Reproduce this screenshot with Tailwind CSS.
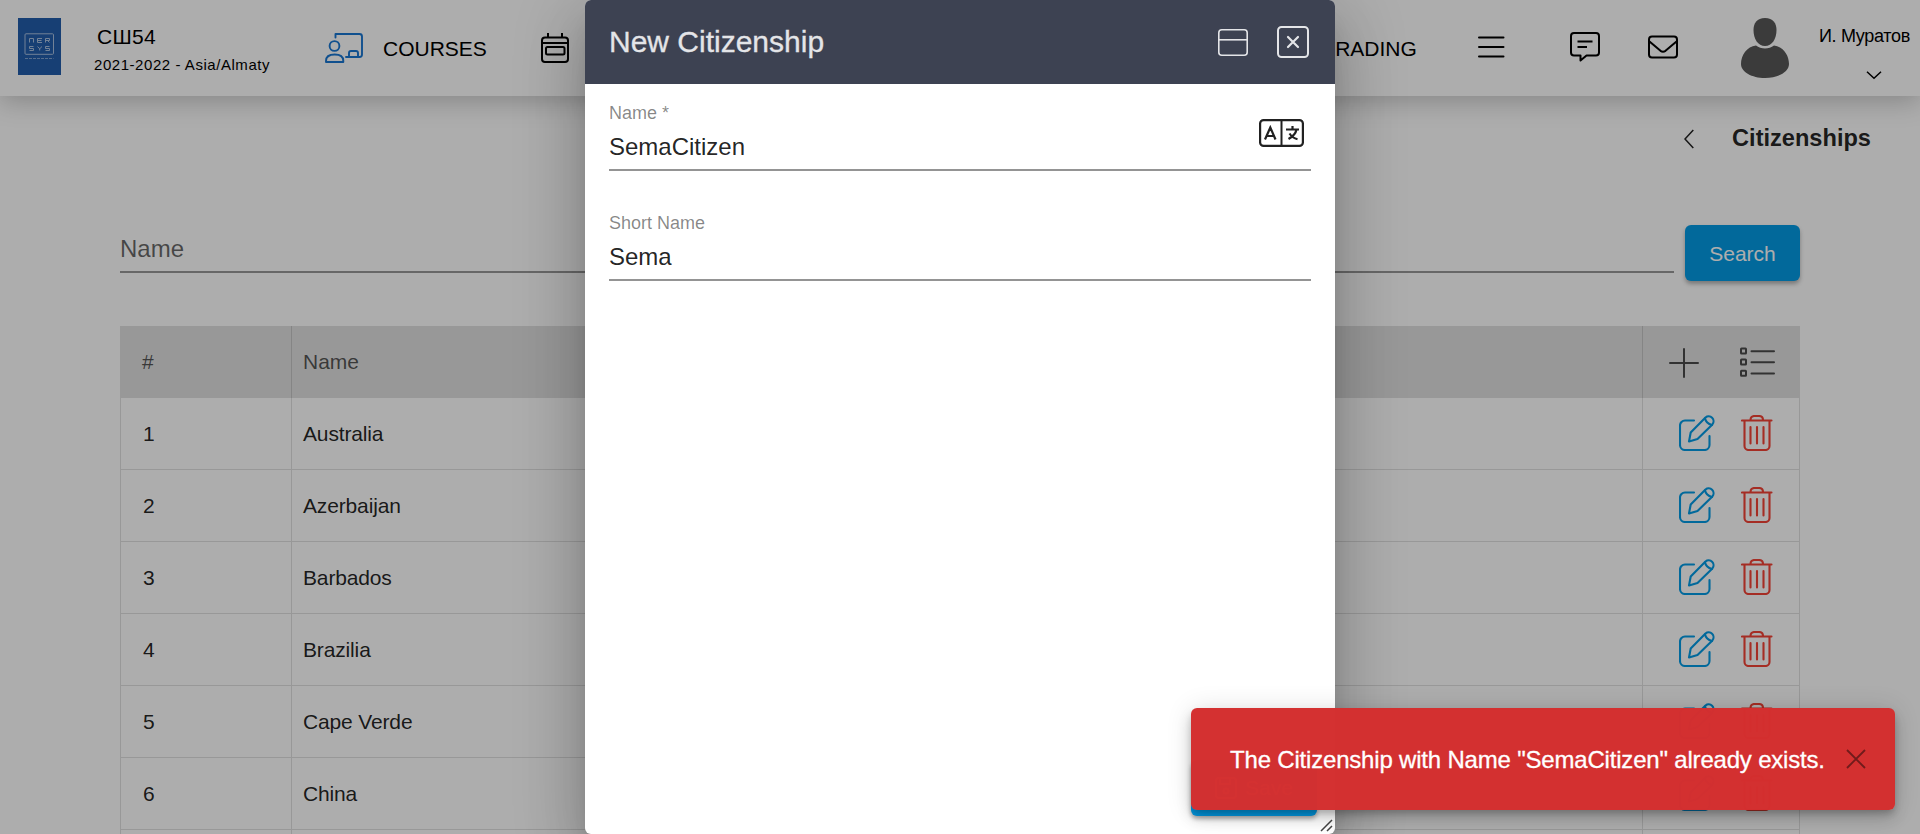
<!DOCTYPE html>
<html lang="en">
<head>
<meta charset="utf-8">
<title>Citizenships</title>
<script src="https://cdn.jsdelivr.net/npm/@tailwindcss/browser@4"></script>
</head>
<body class="relative h-[834px] w-[1920px] overflow-hidden bg-white font-['Liberation_Sans',Arial,sans-serif] text-[21px] text-black/87">
<svg class="hidden">
  <symbol id="edit" viewBox="0 0 36 36"><g fill="none" stroke="currentColor" stroke-width="2.100" stroke-linecap="round" stroke-linejoin="round"><path d="M15 5.500H6A5 5 0 0 0 1 10.500V30A5 5 0 0 0 6 35H25.500A5 5 0 0 0 30.500 30V21"/><path d="M26.500 2.500a4.900 4.900 0 0 1 6.900 6.900L18.500 24L10 26.500L11.700 17.500z"/><path d="M26 3.200Q27 8.500 33 10"/></g></symbol>
  <symbol id="trash" viewBox="0 0 32 36"><g fill="none" stroke="currentColor" stroke-width="2.100" stroke-linecap="round" stroke-linejoin="round"><path d="M1 5.500H30.500M9.500 5C9.500 2.500 11 1 13.500 1H18C20.500 1 22 2.500 22 5M3.500 6V31A4 4 0 0 0 7.500 35H24.500A4 4 0 0 0 28.500 31V6M9.500 12V28.500M16 12V28.500M22.500 12V28.500"/></g></symbol>
</svg>

<header class="relative flex h-24 bg-white text-black shadow-[0_6px_24px_rgba(0,0,0,0.22)]">
  <div class="mt-[18px] ml-[18px] flex h-[57px] w-[43px] justify-center bg-[#225dac]">
    <svg class="mt-[15px]" width="31" height="28" viewBox="0 0 31 28" fill="none" stroke="#a9c0df">
      <rect x="1" y=".8" width="28.500" height="20.500" rx="1" stroke-width="1"/>
      <path d="M5.500 9.500V5.500h4v4M18 5.500h-4.500v4h4.500M13.500 7.500h4M21.500 9.500V5.500h4v2h-4M23.500 7.500l2 2M9.500 13.500h-4v2h4v2h-4M13.500 13.500l2.200 2.300L18 13.500M15.700 15.500v2M25.500 13.500h-4v2h4v2h-4"/>
      <path d="M1 25.500h28.500" stroke-dasharray="3 1" opacity=".7"/>
    </svg>
  </div>
  <div class="ml-[33px] flex w-[231px] flex-col pt-[25px]">
    <span class="pl-[3px] text-[21px] leading-6 tracking-[0.3px]">СШ54</span>
    <span class="mt-[7px] text-[15px] leading-[18px] tracking-[0.55px]">2021-2022 - Asia/Almaty</span>
  </div>
  <div class="flex h-[96px] items-center">
    <svg width="38" height="30" viewBox="0 0 38 30" fill="none" stroke="#1976d2" stroke-width="1.900" stroke-linecap="round" stroke-linejoin="round"><path d="M10.500 4.500V1H34.500Q37 1 37 3.500V21.500Q37 24 34.500 24H21M24 23.500V20Q24 18 26 18H31Q33 18 33 20V23.500"/><circle cx="9.500" cy="13" r="4.900"/><path d="M1 29V28Q1 21.500 9.700 21.500T18.300 28V29Z"/></svg>
    <span class="ml-[20px] pt-px">COURSES</span>
    <svg class="ml-[54px]" width="28" height="30" viewBox="0 0 28 30" fill="none" stroke="black" stroke-width="2"><rect x="1" y="4.500" width="26" height="24.500" rx="3"/><path d="M7 0V4.500M21 0V4.500M1 10H27"/><rect x="5" y="14" width="18.500" height="7.500" rx="1.500"/></svg>
  </div>
  <div class="ml-[750px] flex h-[96px] items-center">
    <span class="pt-px">GRADING</span>
    <svg class="mb-0.5 ml-[61px]" width="27" height="22" viewBox="0 0 27 22" stroke="black" stroke-width="2" stroke-linecap="round"><path d="M1 1.500H25.500M1 11H25.500M1 20.500H25.500"/></svg>
    <svg class="mb-0.5 ml-[65px]" width="30" height="31" viewBox="0 0 30 31" fill="none" stroke="black" stroke-width="2" stroke-linejoin="round"><path d="M4 1H26Q29 1 29 4V20.500Q29 23.500 26 23.500H16.500L10.500 28.500V23.500H4Q1 23.500 1 20.500V4Q1 1 4 1Z"/><path d="M7.500 9.500H22.500M7.500 15H17"/></svg>
    <svg class="mb-0.5 ml-[48px]" width="30" height="24" viewBox="0 0 30 24" fill="none" stroke="black" stroke-width="2" stroke-linejoin="round"><rect x="1" y="1.500" width="28" height="21" rx="3"/><path d="M1.500 6.500L12.500 15.800Q15 17.500 17.500 15.800L28.500 6.500"/></svg>
    <svg class="ml-[63px]" width="48" height="60" viewBox="0 0 48 60" fill="#575757"><path d="M24 0C32 0 35.500 5 35.500 12C35.500 21 31 28 24 28S12.500 21 12.500 12C12.500 5 16 0 24 0Z"/><path d="M15 27.500C20 31.500 28 31.500 33 27.500C42 28.500 48 37 48 46C48 54 37 60 24 60S0 54 0 46C0 37 6 28.500 15 27.500Z"/></svg>
    <div class="ml-[30px] flex w-[94px] flex-col self-start pt-[25px] text-[18px] leading-[22px]"><span class="whitespace-nowrap tracking-[-0.3px]">И. Муратов</span>
      <svg class="mt-[24px] ml-[47px]" width="16" height="9" viewBox="0 0 16 9" fill="none" stroke="black" stroke-width="1.500"><path d="M1 .7L8 7.300L15 .7"/></svg>
    </div>
  </div>
</header>

<main>
  <div class="flex h-[84px] items-center justify-end pt-0.5 pr-[49px]">
    <svg class="mr-[38px]" width="10" height="20" viewBox="0 0 10 20" fill="none" stroke="#222" stroke-width="1.500"><path d="M9.300 1L1 10L9.300 19"/></svg>
    <h1 class="text-[23.600px] font-bold">Citizenships</h1>
  </div>
  <div class="mx-[120px] mt-[45px] flex gap-[11px]">
    <div class="h-12 flex-1 border-b-2 border-[#999] pt-[10px] text-2xl leading-7 text-black/60">Name</div>
    <button class="h-14 w-[115px] rounded-md bg-[#039be5] pt-0.5 text-white shadow-[0_3px_4px_rgba(0,0,0,0.3)]">Search</button>
  </div>
  <div class="mx-[120px] mt-[45px] h-[508px] overflow-hidden border-x border-black/12">
    <div class="grid h-[72px] grid-cols-[170px_1351px_1fr] items-center bg-[#e0e0e0] text-black/65">
      <span class="pl-[21px]">#</span><span class="flex h-full items-center border-l border-black/12 pl-[11px]">Name</span>
      <span class="flex h-full items-center border-l border-black/12 pt-0.5 pl-[26px]">
        <svg width="30" height="30" viewBox="0 0 30 30" stroke="#4b4b4b" stroke-width="2" stroke-linecap="round"><path d="M15 1V29M1 15H29"/></svg>
        <svg class="mb-[3px] ml-[41px]" width="36" height="30" viewBox="0 0 36 30" fill="none" stroke="#4b4b4b" stroke-width="2" stroke-linecap="round"><path d="M11.500 4.200H34M11.500 15.200H34M11.500 26.500H34"/><rect x="1" y="1.500" width="5" height="5" rx=".5"/><rect x="1" y="12.500" width="5" height="5" rx=".5"/><rect x="1" y="23.800" width="5" height="5" rx=".5"/></svg>
      </span>
    </div>
    <div id="rows"></div>
  </div>
</main>

<template id="row">
  <div class="grid h-[72px] grid-cols-[170px_1351px_1fr] items-center border-b border-black/12">
    <span class="pl-[22px]"></span><span class="flex h-full items-center border-l border-black/12 pl-[11px] tracking-[-0.15px]"></span>
    <span class="flex h-full items-center border-l border-black/12 pb-px pl-[36px]"><svg class="size-9 text-[#039be5]"><use href="#edit"/></svg><svg class="ml-[26px] h-9 w-8 text-[#f44336]"><use href="#trash"/></svg></span>
  </div>
</template>
<script>
  ['Australia', 'Azerbaijan', 'Barbados', 'Brazilia', 'Cape Verde', 'China', ''].forEach((name, i) => {
    const row = document.getElementById('row').content.cloneNode(true);
    const cells = row.querySelectorAll('span');
    cells[0].textContent = name && i + 1;
    cells[1].textContent = name;
    document.getElementById('rows').append(row);
  });
</script>

<div class="absolute inset-0 flex justify-center overflow-hidden bg-black/32">
  <section class="relative flex h-[834px] w-[750px] flex-col rounded-md bg-white shadow-[0_16.5px_22.5px_-10.5px_rgba(0,0,0,0.2),0_36px_57px_4.5px_rgba(0,0,0,0.14),0_13.5px_69px_12px_rgba(0,0,0,0.12)]">
    <div class="flex h-[84px] items-center rounded-t-md bg-[#3d4252] pr-[26px] pl-6 text-[#e4e5e8]">
      <h2 class="flex-1 pb-0.5 text-[30px] [-webkit-text-stroke:0.3px]">New Citizenship</h2>
      <svg width="30" height="27" viewBox="0 0 30 27" fill="none" stroke="currentColor" stroke-width="1.600"><rect x=".8" y=".8" width="28.400" height="25.400" rx="3"/><path d="M1 10.800H29"/></svg>
      <svg class="ml-[29px]" width="32" height="32" viewBox="0 0 32 32" fill="none" stroke="currentColor" stroke-width="2"><rect x="1" y="1" width="30" height="30" rx="3.500"/><path d="M11 11L21 21M21 11L11 21" stroke-linecap="round" stroke-width="2.200"/></svg>
    </div>
    <div class="px-6">
      <div class="flex h-[87px] border-b-2 border-[#949494] pt-[18px]">
        <div class="flex flex-1 flex-col"><span class="text-[18px] leading-[22px] text-black/48">Name *</span><span class="mt-2 text-2xl leading-[30px]">SemaCitizen</span></div>
        <svg class="mt-[17px] mr-[7px]" width="45" height="28" viewBox="0 0 45 28" fill="none" stroke="#212121" stroke-width="2.200"><rect x="1.100" y="1.100" width="42.800" height="25.800" rx="3.500"/><path d="M22.500 1V27" stroke-width="2"/><path d="M6 20.500L11.300 8.500L16.500 20.500M7.500 17H15M27 10.500H40M33.500 7V10.500M37.500 10.500Q36.500 16 29.500 20M30.500 14.500Q33.500 19 38.500 20.300"/></svg>
      </div>
      <div class="mt-[23px] flex h-[87px] flex-col border-b-2 border-[#949494] pt-[18px]"><span class="text-[18px] leading-[22px] text-black/48">Short Name</span><span class="mt-2 text-2xl leading-[30px]">Sema</span></div>
    </div>
    <button class="mt-auto mr-[18px] mb-[18px] flex h-14 w-[126px] items-center justify-center gap-2 self-end rounded-md bg-[#039be5] text-white shadow-[0_3px_4px_rgba(0,0,0,0.3)]"><svg width="22" height="22" viewBox="0 0 22 22" fill="none" stroke="currentColor" stroke-width="2"><rect x="1" y="1" width="20" height="20" rx="3"/><path d="M5 1V7H15V1"/><circle cx="11" cy="14" r="2.500"/></svg>Save</button>
    <svg class="absolute right-0.5 bottom-0.5" width="13" height="13" viewBox="0 0 13 13" stroke="#444" stroke-width="1.500"><path d="M1 12L12 1M7 12L12 7"/></svg>
  </section>
</div>

<div class="absolute top-[708px] left-[1191px] flex h-[102px] w-[704px] items-center rounded-md bg-[#d32f2f]/99 pl-[39px] text-2xl text-white shadow-[0_4.5px_7.5px_-1.5px_rgba(0,0,0,0.2),0_9px_15px_rgba(0,0,0,0.14),0_1.5px_27px_rgba(0,0,0,0.12)]">
  <span class="pt-0.5 tracking-[-0.19px] whitespace-nowrap [-webkit-text-stroke:0.3px]">The Citizenship with Name "SemaCitizen" already exists.</span>
  <svg class="mr-[29px] ml-auto" width="20" height="20" viewBox="0 0 20 20" stroke="#701b1b" stroke-width="1.800"><path d="M1 1L19 19M19 1L1 19"/></svg>
</div>
</body>
</html>
